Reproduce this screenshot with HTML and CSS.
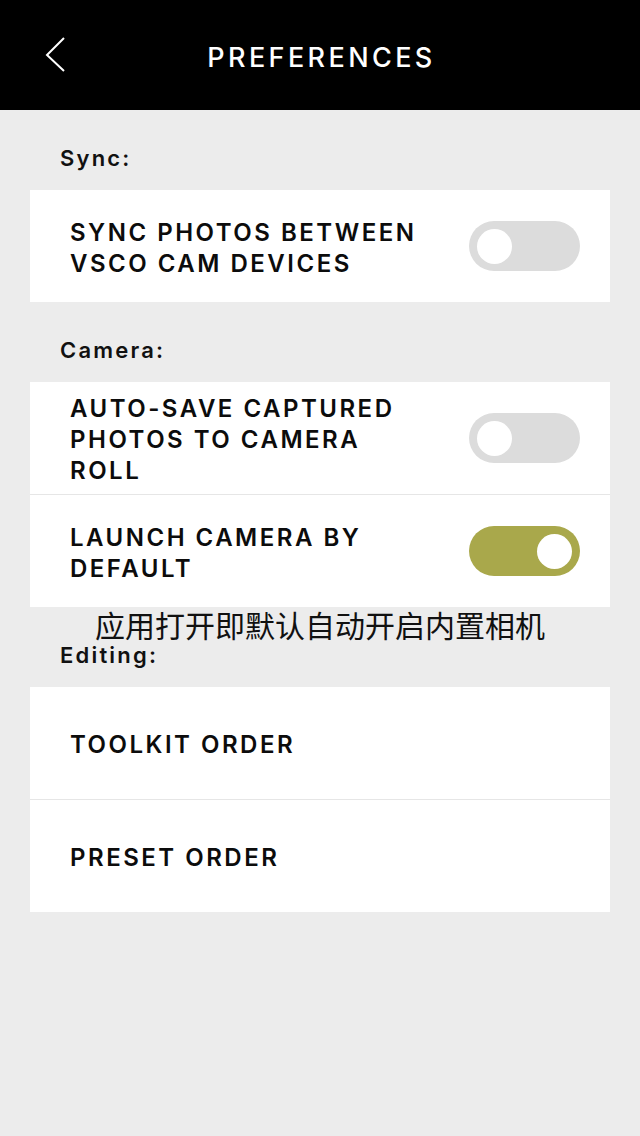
FILE: index.html
```html
<!DOCTYPE html>
<html lang="en">
<head>
<meta charset="utf-8">
<title>Preferences</title>
<link rel="stylesheet" href="styles.css">
</head>
<body>
<div class="screen">
  <header class="topbar">
    <svg class="back" width="24" height="40" viewBox="0 0 24 40" aria-hidden="true">
      <polyline points="20,3 3,20 20,36" fill="none" stroke="#fff" stroke-width="2"/>
    </svg>
    <h1 class="title">PREFERENCES</h1>
  </header>

  <section class="section">
    <div class="section-label">Sync:</div>
    <div class="card">
      <div class="row">
        <div class="row-text">SYNC PHOTOS BETWEEN<br>VSCO CAM DEVICES</div>
        <div class="toggle"><span class="knob"></span></div>
      </div>
    </div>
  </section>

  <section class="section">
    <div class="section-label">Camera:</div>
    <div class="card">
      <div class="row">
        <div class="row-text">AUTO-SAVE CAPTURED<br>PHOTOS TO CAMERA<br>ROLL</div>
        <div class="toggle"><span class="knob"></span></div>
      </div>
      <div class="row">
        <div class="row-text">LAUNCH CAMERA BY<br>DEFAULT</div>
        <div class="toggle on"><span class="knob"></span></div>
      </div>
    </div>
    <div class="note">应用打开即默认自动开启内置相机</div>
  </section>

  <section class="section">
    <div class="section-label">Editing:</div>
    <div class="card">
      <div class="row">
        <div class="row-text">TOOLKIT ORDER</div>
      </div>
      <div class="row">
        <div class="row-text">PRESET ORDER</div>
      </div>
    </div>
  </section>
</div>
</body>
</html>
```
FILE: styles.css
```css
html, body {
  margin: 0;
  padding: 0;
  background: #ececec;
}
body {
  font-family: "Inter", "Noto Sans", "Liberation Sans", sans-serif;
  color: #111;
}
.screen {
  width: 640px;
  min-height: 1136px;
  background: #ececec;
}
.topbar {
  position: relative;
  height: 110px;
  background: #000;
  display: flex;
  align-items: center;
  justify-content: center;
}
.back {
  position: absolute;
  left: 44px;
  top: 35px;
}
.title {
  margin: 0;
  color: #fff;
  font-size: 27px;
  font-weight: 500;
  letter-spacing: 3.4px;
  line-height: 1;
  padding: 4px 0 0 3px;
}
.section {
  position: relative;
}
.section-label {
  height: 80px;
  box-sizing: border-box;
  padding: 37px 0 0 60px;
  font-size: 22px;
  line-height: 22px;
  font-weight: 600;
  letter-spacing: 2.2px;
  color: #111;
}
.card {
  margin: 0 30px;
  background: #fff;
}
.row {
  height: 112px;
  box-sizing: border-box;
  display: flex;
  align-items: center;
  justify-content: space-between;
  padding: 3px 30px 0 40px;
}
.row + .row {
  height: 113px;
  border-top: 1px solid #e6e6e6;
}
.row-text {
  font-size: 24px;
  line-height: 31px;
  font-weight: 600;
  letter-spacing: 2.5px;
  color: #0c0c0c;
}
.toggle {
  width: 111px;
  height: 50px;
  border-radius: 25px;
  background: #dcdcdc;
  box-sizing: border-box;
  padding: 0 8px;
  display: flex;
  align-items: center;
  justify-content: flex-start;
  flex-shrink: 0;
  margin-top: -3px;
}
.toggle.on {
  background: #a9a84b;
  justify-content: flex-end;
}
.knob {
  width: 35px;
  height: 35px;
  border-radius: 50%;
  background: #fff;
}
.note {
  position: absolute;
  left: 95px;
  bottom: -32px;
  font-family: "Noto Sans CJK SC", sans-serif;
  font-size: 30px;
  line-height: 30px;
  color: #111;
  white-space: nowrap;
  z-index: 2;
}
```
